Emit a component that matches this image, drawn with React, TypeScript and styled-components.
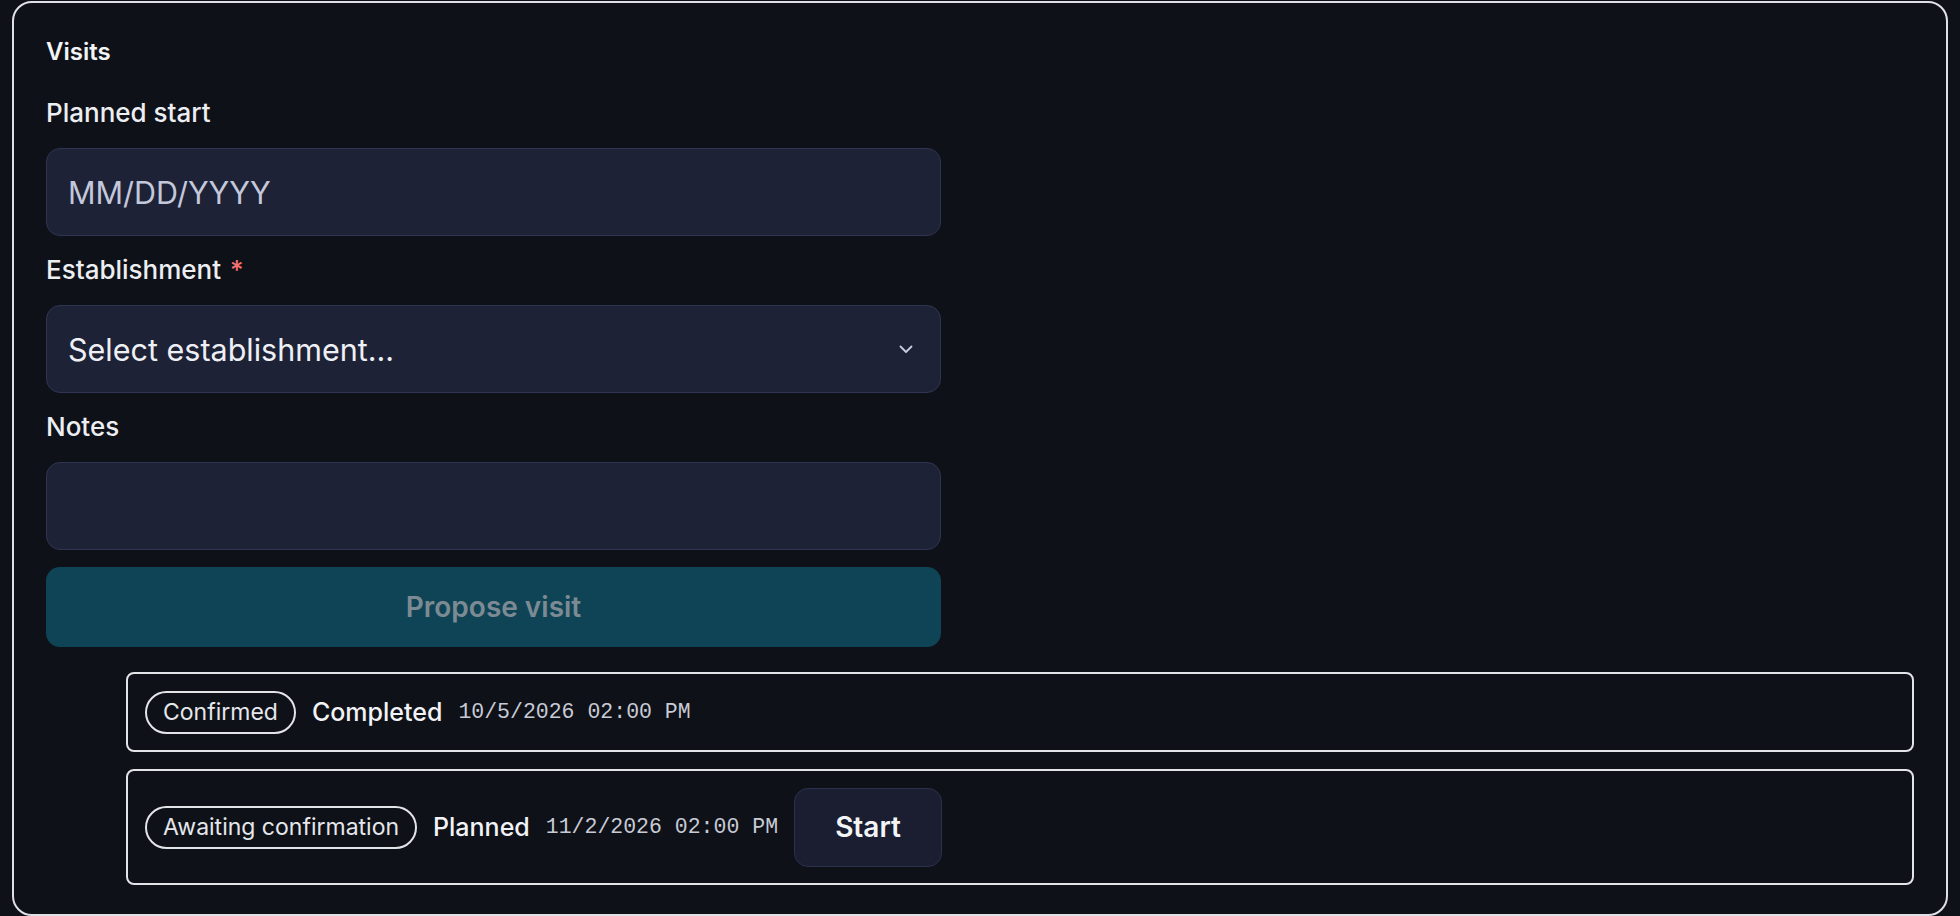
import styled, { createGlobalStyle } from "styled-components";

const GlobalStyle = createGlobalStyle`
  html, body {
    margin: 0;
    padding: 0;
    background: #0f1118;
  }

  body {
    font-family: Inter, "Noto Sans", "Liberation Sans", sans-serif;
    color: #eceef2;
  }

  * {
    box-sizing: border-box;
  }
`;

const Page = styled.div`
  padding: 1px 12px 0;
`;

const Panel = styled.section`
  border: 2px solid #dfe1e6;
  border-radius: 20px;
  background: #0f1118;
  padding: 34px 32px 29px;
`;

const Title = styled.h2`
  margin: 0;
  font-size: 24px;
  font-weight: 600;
  line-height: 30px;
  color: #f3f4f6;
`;

const Form = styled.form`
  display: flex;
  flex-direction: column;
  width: 895px;
  margin-top: 30px;
`;

const Field = styled.div`
  display: flex;
  flex-direction: column;
  gap: 19px;

  & + & {
    margin-top: 18px;
  }
`;

const Label = styled.label`
  font-size: 26px;
  font-weight: 500;
  line-height: 32px;
  color: #eceef2;
`;

const Required = styled.span`
  margin-left: 9px;
  color: #f87171;
`;

const inputBase = `
  width: 100%;
  height: 88px;
  padding: 0 21px;
  border: 1.5px solid #2f3451;
  border-radius: 14px;
  background: #1e2236;
  font-family: Inter, "Noto Sans", sans-serif;
  font-size: 30.5px;
  color: #eef0f5;
  outline: none;
`;

const TextInput = styled.input`
  ${inputBase}

  &::placeholder {
    color: #c3c8db;
  }
`;

const NotesInput = styled.textarea`
  ${inputBase}
  padding-top: 24px;
  resize: none;
  display: block;
`;

const SelectTrigger = styled.button`
  ${inputBase}
  display: flex;
  align-items: center;
  justify-content: space-between;
  padding-right: 27px;
  text-align: left;
  cursor: pointer;
`;

const Chevron = () => (
  <svg width="14" height="9" viewBox="0 0 14 9" fill="none">
    <polyline
      points="1.5,1.5 7,7 12.5,1.5"
      stroke="#c8cde0"
      strokeWidth="1.8"
      strokeLinecap="round"
      strokeLinejoin="round"
    />
  </svg>
);

const ProposeButton = styled.button`
  margin-top: 17px;
  height: 80px;
  border: none;
  border-radius: 14px;
  background: #0f4456;
  color: #7c8b93;
  font-family: Inter, "Noto Sans", sans-serif;
  font-size: 28px;
  font-weight: 600;
`;

const VisitList = styled.div`
  display: flex;
  flex-direction: column;
  gap: 17px;
  margin: 25px 0 0 80px;
`;

const VisitRow = styled.div`
  display: flex;
  align-items: center;
  gap: 16px;
  padding: 16.5px 17px;
  border: 2px solid #e2e4e8;
  border-radius: 8px;
`;

const StatusChip = styled.span`
  display: inline-flex;
  align-items: center;
  height: 43px;
  padding: 0 16px;
  border: 2px solid #e2e4e8;
  border-radius: 999px;
  font-size: 23px;
  color: #e5e7eb;
  white-space: nowrap;
`;

const VisitState = styled.span`
  font-size: 25px;
  font-weight: 500;
  color: #f2f3f6;
`;

const VisitDate = styled.span`
  font-family: "Liberation Mono", "DejaVu Sans Mono", monospace;
  font-size: 21.5px;
  color: #c7cbd6;
  white-space: nowrap;
`;

const StartButton = styled.button`
  width: 148px;
  height: 79px;
  border: 1.5px solid #2c3150;
  border-radius: 14px;
  background: #1b1e31;
  color: #f3f4f6;
  font-family: Inter, "Noto Sans", sans-serif;
  font-size: 28px;
  font-weight: 600;
  cursor: pointer;
`;

type Visit = {
  id: number;
  confirmation: string;
  state: string;
  date: string;
  canStart?: boolean;
};

const visits: Visit[] = [
  { id: 1, confirmation: "Confirmed", state: "Completed", date: "10/5/2026 02:00 PM" },
  {
    id: 2,
    confirmation: "Awaiting confirmation",
    state: "Planned",
    date: "11/2/2026 02:00 PM",
    canStart: true,
  },
];

export default function App() {
  return (
    <>
      <GlobalStyle />
      <Page>
        <Panel>
          <Title>Visits</Title>
          <Form onSubmit={(e) => e.preventDefault()}>
            <Field>
              <Label htmlFor="planned-start">Planned start</Label>
              <TextInput id="planned-start" placeholder="MM/DD/YYYY" />
            </Field>
            <Field>
              <Label>
                Establishment<Required>*</Required>
              </Label>
              <SelectTrigger type="button">
                <span>Select establishment...</span>
                <Chevron />
              </SelectTrigger>
            </Field>
            <Field>
              <Label htmlFor="notes">Notes</Label>
              <NotesInput id="notes" />
            </Field>
            <ProposeButton type="submit" disabled>
              Propose visit
            </ProposeButton>
          </Form>
          <VisitList>
            {visits.map((visit) => (
              <VisitRow key={visit.id}>
                <StatusChip>{visit.confirmation}</StatusChip>
                <VisitState>{visit.state}</VisitState>
                <VisitDate>{visit.date}</VisitDate>
                {visit.canStart && <StartButton>Start</StartButton>}
              </VisitRow>
            ))}
          </VisitList>
        </Panel>
      </Page>
    </>
  );
}
